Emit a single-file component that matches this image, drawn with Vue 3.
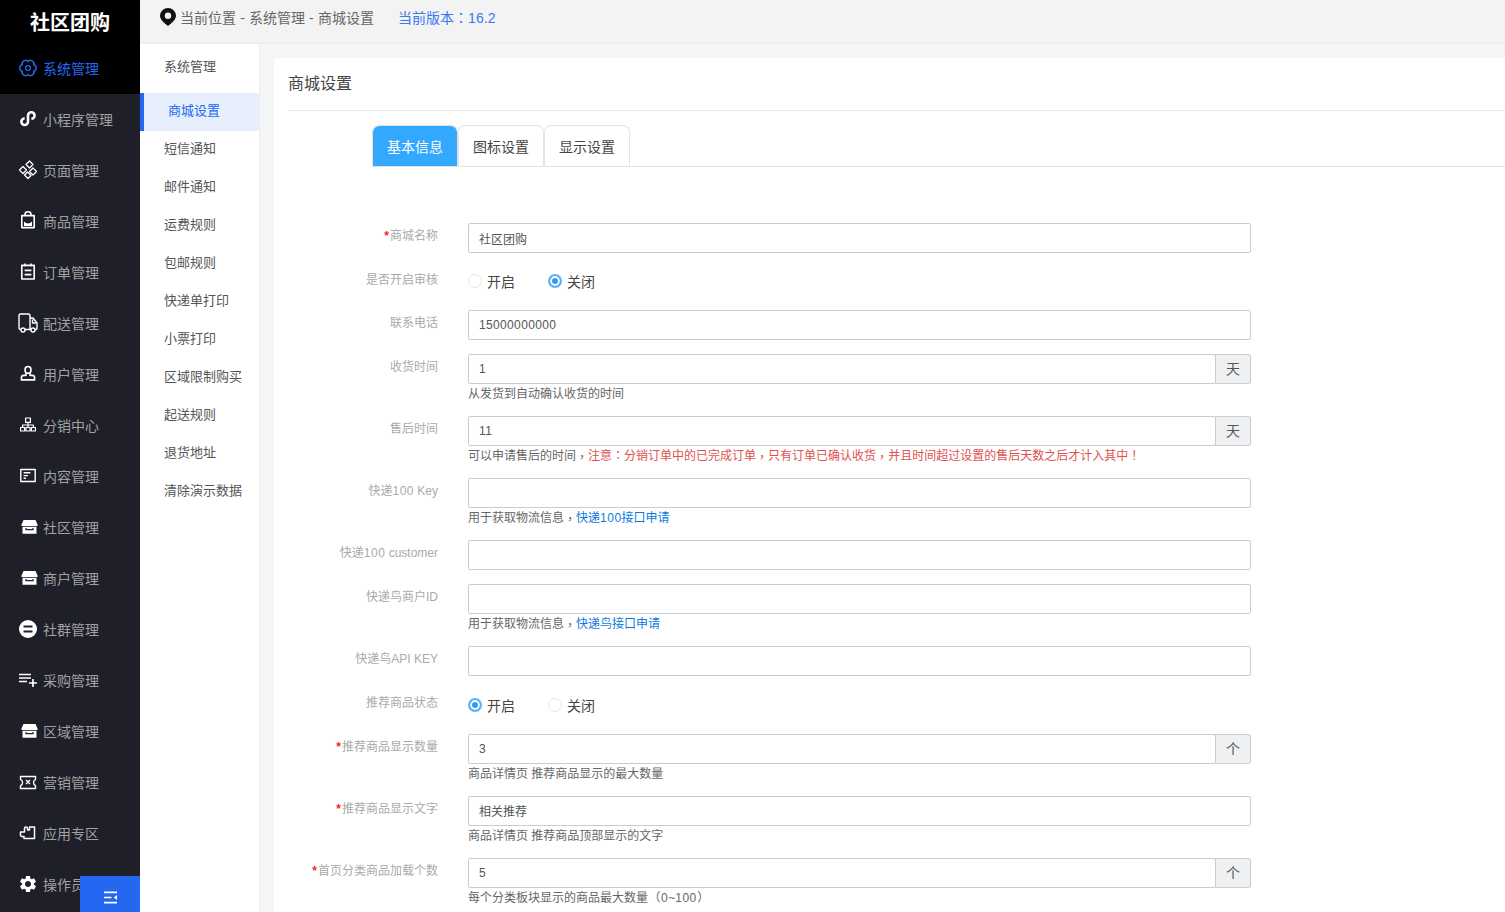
<script setup>
const gearFill = 'M19.14 12.94c.04-.3.06-.61.06-.94 0-.32-.02-.64-.07-.94l2.03-1.58c.18-.14.23-.41.12-.61l-1.92-3.32c-.12-.22-.37-.29-.59-.22l-2.39.96c-.5-.38-1.03-.7-1.62-.94l-.36-2.54c-.04-.24-.24-.41-.48-.41h-3.84c-.24 0-.43.17-.47.41l-.36 2.54c-.59.24-1.13.57-1.62.94l-2.39-.96c-.22-.08-.47 0-.59.22L2.74 8.87c-.12.21-.08.47.12.61l2.03 1.58c-.05.3-.09.63-.09.94s.02.64.07.94l-2.03 1.58c-.18.14-.23.41-.12.61l1.92 3.32c.12.22.37.29.59.22l2.39-.96c.5.38 1.03.7 1.62.94l.36 2.54c.05.24.24.41.48.41h3.84c.24 0 .44-.17.47-.41l.36-2.54c.59-.24 1.13-.56 1.62-.94l2.39.96c.22.08.47 0 .59-.22l1.92-3.32c.12-.22.07-.47-.12-.61l-2.01-1.58zM12 15.6c-1.98 0-3.6-1.62-3.6-3.6s1.62-3.6 3.6-3.6 3.6 1.62 3.6 3.6-1.62 3.6-3.6 3.6z'

const shop = {
  fill: 'M5.5 3H17.5L19.5 7.5V9H3.5V7.5ZM4.5 9.8H18.5V16.8H4.5Z',
  cut: 'M8 11V12.6H15V11'
}

const menu = [
  { name: '系统管理', active: true, w: 1.4, stroke: 'M10 3.4A3.4 3.4 0 0 1 15.7 6.7A3.4 3.4 0 0 1 15.7 13.3A3.4 3.4 0 0 1 10 16.6A3.4 3.4 0 0 1 4.3 13.3A3.4 3.4 0 0 1 4.3 6.7A3.4 3.4 0 0 1 10 3.4ZM10 7.6A2.4 2.4 0 1 1 10 12.4A2.4 2.4 0 1 1 10 7.6Z' },
  { name: '小程序管理', w: 2.6, stroke: 'M6.6 9.4A3.3 3.3 0 1 0 10 12.8V6.4A3.3 3.3 0 1 1 13.4 9.8' },
  { name: '页面管理', w: 1.3, stroke: 'M11.5 1L15 4.5L11.5 8L8 4.5ZM5 6.5L8.5 10L5 13.5L1.5 10ZM15 8L18.5 11.5L15 15L11.5 11.5ZM9.5 12L13 15.5L10 18.5L6.5 15Z' },
  { name: '商品管理', w: 1.6, stroke: 'M3.8 4.6H16.2V16.6H3.8ZM7 4.6V3.4A3 2.6 0 0 1 13 3.4V4.6', fill: 'M6 10.5Q10 14.5 14 10.5V15H6Z' },
  { name: '订单管理', w: 1.6, stroke: 'M3.8 3.4H16.2V17H3.8ZM7 1.6V4.4M13 1.6V4.4M6.6 8.4H13.4M6.6 12.6H13.4' },
  { name: '配送管理', w: 1.4, stroke: 'M3 16.5H2.4A1.4 1.4 0 0 1 1 15V2.5A1.4 1.4 0 0 1 2.4 1H10.6A1.4 1.4 0 0 1 12 2.5V16.5H7M12 5H15L19 10V15.5A1 1 0 0 1 18 16.5H17M12 16.5H13M14.5 6.5V10H18M7 17A2 2 0 1 1 3 17A2 2 0 1 1 7 17ZM17 17A2 2 0 1 1 13 17A2 2 0 1 1 17 17Z' },
  { name: '用户管理', w: 1.6, stroke: 'M10 2.5A3 3.4 0 0 1 13 5.9A3 3.4 0 0 1 7 5.9A3 3.4 0 0 1 10 2.5ZM8 9.5V11.4H5.6A2.4 2.4 0 0 0 3.4 13.8V15.9H16.6V13.8A2.4 2.4 0 0 0 14.4 11.4H12V9.5' },
  { name: '分销中心', w: 1.2, stroke: 'M7.6 3H12.4V7.4H7.6ZM2.6 12.5H6.6V16H2.6ZM8 12.5H12V16H8ZM13.4 12.5H17.4V16H13.4ZM10 7.4V12.5M4.6 12.5V10H15.4V12.5' },
  { name: '内容管理', w: 1.4, stroke: 'M2.8 3.5H17.2V15.5H2.8ZM5.6 6.8H12.4M5.6 9.6H10M5.6 12.2H8' },
  { name: '社区管理', fill: shop.fill, cut: shop.cut },
  { name: '商户管理', fill: shop.fill, cut: shop.cut },
  { name: '社群管理', fill: 'M10 1A9 9 0 1 1 10 19A9 9 0 1 1 10 1Z', cut: 'M5.5 7.5H14.5M5.5 12.5H14.5', cutW: 1.8 },
  { name: '采购管理', w: 1.7, stroke: 'M1 4.5H13M1 8H13M1 11.5H9M11 13H19M15 9V17' },
  { name: '区域管理', fill: shop.fill, cut: shop.cut },
  { name: '营销管理', w: 1.4, stroke: 'M2.5 4.5H17.5V7.6Q15.5 8.2 15.5 10.5Q15.5 13 17.5 13.6V16.5H2.5V13.6Q4.6 13 4.6 10.5Q4.6 8.2 2.5 7.6ZM8 8L12 12M12 8L8 12' },
  { name: '应用专区', w: 1.5, stroke: 'M2.5 11.5V9H6.5V5.5A1.5 1.5 0 0 1 9.5 5.5V7H11.5V4H16.5V15.5H6V13.5H4A1.5 1.5 0 0 1 2.5 11.5Z' },
  { name: '操作员管理', gear: true }
]

const subItems = ['短信通知', '邮件通知', '运费规则', '包邮规则', '快递单打印', '小票打印', '区域限制购买', '起送规则', '退货地址', '清除演示数据']

const redNote = '注意：分销订单中的已完成订单，只有订单已确认收货，并且时间超过设置的售后天数之后才计入其中！'

const rows = [
  { label: '商城名称', req: true, value: '社区团购' },
  { label: '是否开启审核', radio: 'off' },
  { label: '联系电话', value: '15000000000' },
  { label: '收货时间', value: '1', addon: '天', help: [{ t: '从发货到自动确认收货的时间' }] },
  { label: '售后时间', value: '11', addon: '天', help: [{ t: '可以申请售后的时间，' }, { t: redNote, c: 'red' }] },
  { label: '快递100 Key', value: '', help: [{ t: '用于获取物流信息，' }, { t: '快递100接口申请', c: 'link' }] },
  { label: '快递100 customer', value: '' },
  { label: '快递鸟商户ID', value: '', help: [{ t: '用于获取物流信息，' }, { t: '快递鸟接口申请', c: 'link' }] },
  { label: '快递鸟API KEY', value: '' },
  { label: '推荐商品状态', radio: 'on' },
  { label: '推荐商品显示数量', req: true, value: '3', addon: '个', help: [{ t: '商品详情页 推荐商品显示的最大数量' }] },
  { label: '推荐商品显示文字', req: true, value: '相关推荐', help: [{ t: '商品详情页 推荐商品顶部显示的文字' }] },
  { label: '首页分类商品加载个数', req: true, value: '5', addon: '个', help: [{ t: '每个分类板块显示的商品最大数量（0~100）' }] }
]

// Full-width punctuation sits centred in the reference; digit runs are a little wider.
const classOf = (t) => {
  if (t === '，') return 'punct comma'
  if (t === '（' || t === '）') return 'punct paren'
  if (/^[：！]$/.test(t)) return 'punct'
  if (/^\d+$/.test(t)) return 'lat'
  return ''
}
const seg = (text) =>
  text.split(/([，：！（）]|\d+)/).filter(Boolean).map((t) => ({ t, k: classOf(t) }))
const isNum = (v) => /^\d+$/.test(v)
</script>

<template>
  <div class="app">
    <aside class="sidebar">
      <div class="logo">社区团购</div>
      <div
        v-for="item in menu"
        :key="item.name"
        class="menu-item"
        :class="{ active: item.active }"
      >
        <svg class="menu-icon" viewBox="0 0 20 20">
          <g v-if="item.gear" transform="scale(.84) translate(-.1 -.1)">
            <path :d="gearFill" fill="#fff" />
          </g>
          <path v-if="item.fill" :d="item.fill" fill="#fff" />
          <path
            v-if="item.stroke"
            :d="item.stroke"
            fill="none"
            stroke="currentColor"
            stroke-linejoin="round"
            :stroke-width="item.w"
          />
          <path
            v-if="item.cut"
            :d="item.cut"
            fill="none"
            stroke="#1e1f29"
            :stroke-width="item.cutW || 1.2"
          />
        </svg>
        <span class="menu-text">{{ item.name }}</span>
      </div>
      <div class="collapse">
        <svg viewBox="0 0 16 14" class="collapse-icon">
          <path d="M1 1.5H15M1 7H9M1 12.5H15" stroke="#fff" stroke-width="1.8" fill="none" />
          <path d="M15 4.2V9.8L11.5 7Z" fill="#fff" />
        </svg>
      </div>
    </aside>

    <div class="right">
      <header class="topbar">
        <svg class="pin" viewBox="0 0 16 18">
          <path
            fill-rule="evenodd"
            d="M8 0A8 8 0 0 1 16 7.8C16 12 11 15.5 8 18C5 15.5 0 12 0 7.8A8 8 0 0 1 8 0ZM8 4.6A3.2 3.2 0 1 0 8 11A3.2 3.2 0 1 0 8 4.6Z"
            fill="#111"
          />
        </svg>
        <span class="crumb">当前位置 - 系统管理 - 商城设置</span>
        <span class="version"><span v-for="(s, i) in seg('当前版本：16.2')" :key="i" :class="s.k">{{ s.t }}</span></span>
      </header>

      <div class="content">
        <nav class="subnav">
          <div class="sub-title">系统管理</div>
          <div class="sub-item sub-active">商城设置</div>
          <div v-for="s in subItems" :key="s" class="sub-item">{{ s }}</div>
        </nav>

        <main class="main">
          <section class="card">
            <h1 class="card-title">商城设置</h1>
            <div class="tabs">
              <div class="tab tab-active">基本信息</div>
              <div class="tab">图标设置</div>
              <div class="tab">显示设置</div>
            </div>

            <form class="form">
              <div v-for="row in rows" :key="row.label" class="row" :class="{ 'row-radio': row.radio }">
                <label class="label"><span v-if="row.req" class="star">*</span><span v-for="(s, i) in seg(row.label)" :key="i" :class="s.k">{{ s.t }}</span></label>
                <div class="field">
                  <div v-if="row.radio" class="radios" :class="{ raised: row.radio === 'off' }">
                    <span class="radio-item">
                      <i class="dot" :class="{ checked: row.radio === 'on' }"></i>开启
                    </span>
                    <span class="radio-item">
                      <i class="dot" :class="{ checked: row.radio === 'off' }"></i>关闭
                    </span>
                  </div>
                  <div v-else class="input-group">
                    <input class="input" :class="{ joined: row.addon, num: isNum(row.value) }" type="text" readonly :value="row.value" />
                    <span v-if="row.addon" class="addon">{{ row.addon }}</span>
                  </div>
                  <div v-if="row.help" class="help">
                    <span v-for="part in row.help" :key="part.t" :class="part.c"><span v-for="(s, i) in seg(part.t)" :key="i" :class="s.k">{{ s.t }}</span></span>
                  </div>
                </div>
              </div>
            </form>
          </section>
        </main>
      </div>
    </div>
  </div>
</template>

<style>
html, body {
  margin: 0;
  overflow: hidden;
}
</style>

<style scoped>
.app {
  display: flex;
  height: 100vh;
  overflow: hidden;
  font-family: "Liberation Sans", "Noto Sans CJK SC", sans-serif;
  color: #555;
}
.punct {
  font-family: "Noto Sans CJK TC", sans-serif;
  line-height: 0;
}
.comma {
  vertical-align: -2px;
}
.paren {
  padding: 0 .5px;
}
.lat {
  letter-spacing: .5px;
}
.sidebar {
  position: relative;
  flex: 0 0 140px;
  background: #1e1f29;
  overflow: hidden;
}
.logo {
  height: 44px;
  line-height: 46px;
  padding-left: 30px;
  background: #000;
  color: #fff;
  font-size: 20px;
  font-weight: 700;
}
.menu-item {
  display: flex;
  align-items: center;
  gap: 5px;
  height: 51px;
  padding-left: 18px;
  color: #fff;
  white-space: nowrap;
}
.menu-item.active {
  height: 50px;
  background: #000;
  color: #2468f2;
}
.menu-icon {
  flex: 0 0 20px;
  width: 20px;
  height: 20px;
  margin-top: -2px;
}
.menu-text {
  margin-top: -2px;
  font-size: 14px;
  color: #a1a1a1;
}
.active .menu-text {
  color: #2468f2;
}
.collapse {
  position: absolute;
  right: 0;
  bottom: 0;
  display: flex;
  align-items: center;
  justify-content: center;
  width: 60px;
  height: 36px;
  background: #2468f2;
}
.collapse-icon {
  width: 15px;
  height: 13px;
  margin-top: 6px;
}
.right {
  flex: 1;
  display: flex;
  flex-direction: column;
  min-width: 0;
}
.topbar {
  flex: 0 0 44px;
  box-sizing: border-box;
  display: flex;
  align-items: center;
  gap: 4px;
  padding: 0 0 10px 20px;
  background: #f3f3f4;
  border-bottom: 1px solid #ebebeb;
  font-size: 14px;
  color: #666;
}
.pin {
  width: 16px;
  height: 18px;
}
.crumb {
  word-spacing: .25px;
}
.version {
  margin-left: 20px;
  color: #3b78ee;
}
.version .lat {
  letter-spacing: .2px;
}
.content {
  flex: 1;
  display: flex;
  min-height: 0;
}
.subnav {
  flex: 0 0 120px;
  box-sizing: border-box;
  background: #fff;
  border-right: 1px solid #ececec;
  font-size: 13px;
  color: #555;
}
.sub-title {
  height: 49px;
  line-height: 46px;
  padding-left: 24px;
}
.sub-item {
  height: 38px;
  line-height: 36px;
  padding-left: 24px;
  white-space: nowrap;
}
.sub-active {
  padding-left: 24px;
  border-left: 4px solid #2468f2;
  background: #e8effc;
  color: #2468f2;
}
.main {
  flex: 1;
  min-width: 0;
  padding: 14px 0 0 14px;
  background: #f4f5f7;
}
.card {
  height: 100%;
  box-sizing: border-box;
  padding-left: 14px;
  background: #fff;
  overflow: hidden;
}
.card-title {
  box-sizing: border-box;
  height: 53px;
  margin: 0;
  line-height: 52px;
  border-bottom: 1px solid #ececec;
  font-size: 16px;
  font-weight: 400;
  color: #444;
}
.tabs {
  display: flex;
  box-sizing: border-box;
  height: 42px;
  margin: 14px 0 56px 84px;
  border-bottom: 1px solid #e4e4e4;
}
.tab {
  box-sizing: border-box;
  width: 86px;
  height: 41px;
  line-height: 43px;
  text-align: center;
  font-size: 14px;
  color: #444;
  border: 1px solid #e4e4e4;
  border-bottom: 0;
  border-radius: 7px 7px 0 0;
}
.tab-active {
  background: #33a8ff;
  background-clip: padding-box;
  color: #fff;
}
.row {
  display: flex;
  margin-bottom: 14px;
}
.row-radio {
  height: 29.4px;
}
.label {
  flex: 0 0 150px;
  box-sizing: border-box;
  padding-top: 5px;
  line-height: 17px;
  text-align: right;
  font-size: 12px;
  color: #aaa;
  white-space: nowrap;
}
.star {
  color: #f0262c;
  margin-right: 1px;
  font-weight: 700;
}
.field {
  flex: 0 0 783px;
  margin-left: 30px;
}
.input-group {
  display: flex;
  height: 30px;
}
.input {
  flex: 1;
  min-width: 0;
  box-sizing: border-box;
  height: 30px;
  padding: 0 10px;
  border: 1px solid #ccc;
  border-radius: 2px;
  outline: 0;
  background: #fff;
  font: 12px "Liberation Sans", "Noto Sans CJK SC", sans-serif;
  color: #555;
}
.input.num {
  letter-spacing: .35px;
}
.input.joined {
  border-radius: 2px 0 0 2px;
}
.addon {
  flex: 0 0 35px;
  box-sizing: border-box;
  line-height: 28px;
  text-align: center;
  border: 1px solid #ccc;
  border-left: 0;
  border-radius: 0 3px 3px 0;
  background: #eef0f1;
  font-size: 14px;
  color: #555;
}
.radios {
  display: flex;
  align-items: center;
  height: 100%;
  font-size: 14px;
  color: #444;
}
.radios.raised {
  margin-top: -1px;
}
.radio-item {
  display: inline-flex;
  align-items: center;
  gap: 5px;
  margin-right: 33px;
}
.dot {
  box-sizing: border-box;
  width: 14px;
  height: 14px;
  border: 1px solid #e6e6e6;
  border-radius: 50%;
  background: #fff;
}
.dot.checked {
  border: 2px solid #5db2f5;
  background: #2f9df4;
  box-shadow: inset 0 0 0 2px #fff;
}
.help {
  height: 18px;
  line-height: 21px;
  font-size: 12px;
  color: #666;
  white-space: nowrap;
}
.red {
  color: #e14f4f;
}
.link {
  color: #0c7ae0;
}
</style>
